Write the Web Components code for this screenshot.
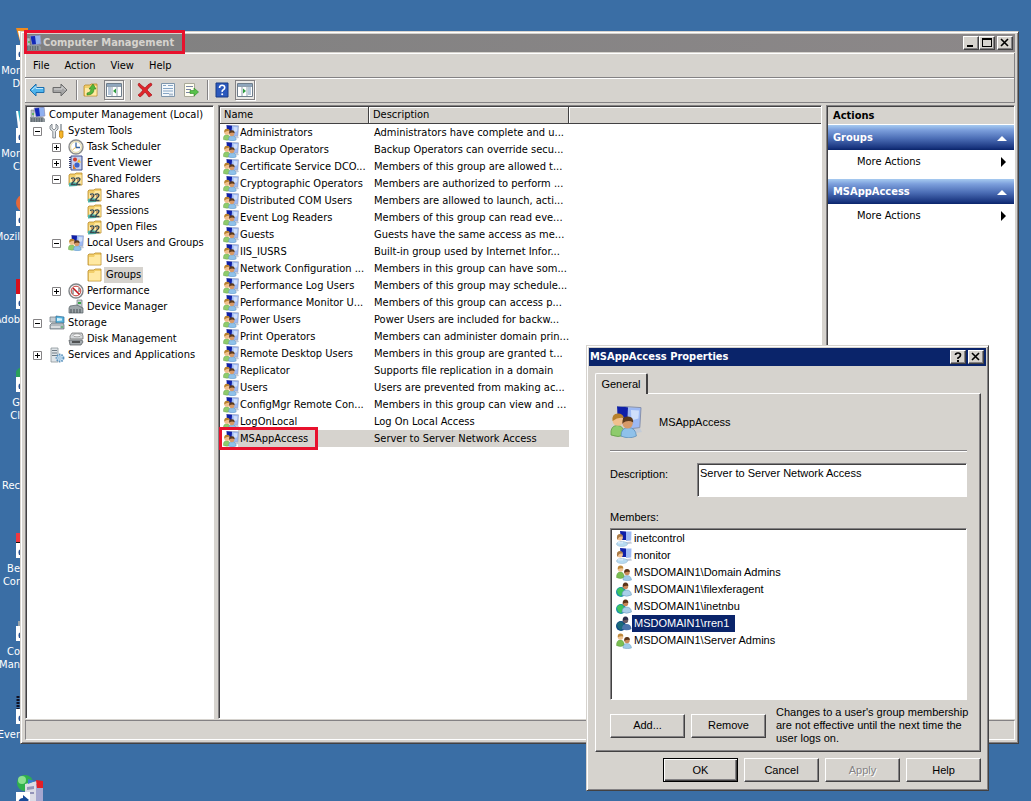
<!DOCTYPE html>
<html lang="en">
<head>
<meta charset="utf-8">
<title>Computer Management</title>
<style>
    :root {
        --face: #d6d3ce;
        --light: #ffffff;
        --shadow: #848284;
        --dark: #424142;
        --navy: #0a246a;
        --mark: #e8112d;
        --ui-font: Tahoma, "DejaVu Sans Condensed", "DejaVu Sans", sans-serif;
        --dialog-font: "MS Sans Serif", "Liberation Sans", Arial, sans-serif;
    }
    html, body {
        margin: 0;
        height: 100%;
    }
    body {
        font: 11px/16px var(--ui-font);
        color: #000;
        background: #3a6ea5;
    }
</style>
</head>
<body>
<desk-top>
    <desktop-icon kind="orange" lines="Mor|D"></desktop-icon>
    <desktop-icon kind="cyan" lines="Mor|C"></desktop-icon>
    <desktop-icon kind="fox" lines="Mozil"></desktop-icon>
    <desktop-icon kind="red" lines="Adob"></desktop-icon>
    <desktop-icon kind="green" lines="G|Cl"></desktop-icon>
    <desktop-icon kind="none" lines="Rec"></desktop-icon>
    <desktop-icon kind="redblack" lines="Be|Cor"></desktop-icon>
    <desktop-icon kind="gray" lines="Co|Man"></desktop-icon>
    <desktop-icon kind="black" lines="Ever"></desktop-icon>
    <desktop-icon kind="server" lines=""></desktop-icon>

    <management-window slot="window" caption="Computer Management">
        <console-tree slot="tree"></console-tree>
        <group-list slot="list"></group-list>
        <actions-pane slot="actions">
            <action-section heading="Groups"></action-section>
            <action-section heading="MSAppAccess"></action-section>
        </actions-pane>
    </management-window>

    <properties-dialog slot="dialog" group="MSAppAccess"></properties-dialog>
</desk-top>

<script>
// 16x16 glyphs, keyed by name
const FOLDER = `
    <path d="M1 14V4l1-1h5l1-1h6v12z" fill="#f2cf6b" stroke="#b98a2c" stroke-width=".8"/>
    <path d="M2 13.5V6h5l1-2h5.500v9.500z" fill="#ffe9a3"/>`;

const GLYPHS = {
    computer: `
        <path d="M4 1l10-1 1 9-9 1z" fill="#1228b8"/><path d="M9 1l5-.7 1 8.400-5 .6z" fill="#8fb0f0"/>
        <path d="M4 1l10-1 1 9-9 1z" fill="none" stroke="#aab" stroke-width=".7"/>
        <path d="M1 3h3v8H1z" fill="#b9c0c8" stroke="#777" stroke-width=".5"/>
        <path d="M0 10h13l2 2v3H0z" fill="#8f979c"/><path d="M1 12h12M1 14h12" stroke="#3d4850" stroke-dasharray="1.500 1"/>
        <circle cx="3" cy="7" r="1" fill="#49b64b"/>`,
    tools: `
        <path d="M3 1v4l2 2 2-2V1l2 2v3L6.500 8.500V15H3.800V8.500L1 6V3z" fill="#dfe3e6" stroke="#6d757b" stroke-width=".8"/>
        <path d="M12 1v7" stroke="#8b959b" stroke-width="1.500"/>
        <path d="M10.500 8h3.500v6l-1.700 1.500L10.500 14z" fill="#f5b52b" stroke="#b47505" stroke-width=".7"/>`,
    clock: `
        <circle cx="8" cy="8" r="7" fill="#f7f4e4" stroke="#8b8c8d" stroke-width="1.400"/>
        <circle cx="8" cy="8" r="5.400" fill="#fff" stroke="#e2d7a4"/>
        <path d="M8 3.500V8.500H12" fill="none" stroke="#3465a4" stroke-width="1.300"/>
        <path d="M8 8L4.500 11" stroke="#e9b74b"/>`,
    events: `
        <path d="M3 1h11v14H3z" fill="#c6d0ee" stroke="#3b4a8c"/>
        <path d="M2 2v12" stroke="#39406e" stroke-width="2" stroke-dasharray="1 1"/>
        <circle cx="7" cy="4.500" r="2" fill="#d23b2e"/><path d="M11 4l2 3.500H9z" fill="#f2bf2b"/>
        <circle cx="9" cy="10" r="2.600" fill="#3c62c9"/><path d="M5 9v5h3z" fill="#e07d2c"/>`,
    folder: FOLDER,
    shared: FOLDER + `
        <path d="M1 12l4-1 5 1-1 3-8 .5z" fill="#4eb7ad"/>
        <path d="M3 7.500q3-1.500 4 .5q0 1.500-2.500 3.500l-1 2h4M8 7.500q3-1.500 4 .5q0 1.500-2.500 3.500l-1 2h4" fill="none" stroke="#3b4a50" stroke-width="1.400"/>
        <circle cx="5" cy="9" r="1" fill="#b9824c"/><circle cx="10" cy="9" r="1" fill="#b9824c"/>`,
    group: `
        <path d="M9 12l6-1 1 2-6 1z" fill="#c3cbd8"/>
        <path d="M3.500 0L9 .6l-.3 8.400L4 9z" fill="#0f1fa8"/>
        <path d="M9 .6l6.500.2-.6 10-6 .6z" fill="#9db9f4"/>
        <path d="M10.500 2l4 .2-.3 4-3.500 1z" fill="#cfdffb"/>
        <path d="M3.500 0l12 .8-.6 10-5 .6" fill="none" stroke="#8791ad" stroke-width=".5"/>
        <path d="M.5 14.500q-.5-4.500 3-4.800q3.500 0 4 4.800q-3.500 1.500-7 0z" fill="#8ecb6c" stroke="#5f9a45" stroke-width=".4"/>
        <circle cx="4" cy="7.200" r="2.700" fill="#f0c08d"/>
        <path d="M1.300 7.500q-.6-3.800 2.700-3.800q2.600 0 2.900 2.300q-3-.6-5.600 1.500z" fill="#b8812c"/>
        <path d="M5.500 15q0-4.200 3.700-4.200q3.600 0 4 4.200q-3.700 1.800-7.700 0z" fill="#8fc1ea" stroke="#5a8fbd" stroke-width=".4"/>
        <circle cx="8.800" cy="8.600" r="2.600" fill="#d79a68"/>
        <path d="M6.200 8.600q-.3-3.600 2.800-3.400q2.800.1 2.600 3q-2.600-1.600-5.400.4z" fill="#5b3a1c"/>`,
    performance: `
        <circle cx="8" cy="8" r="7" fill="#f3f3f3" stroke="#808488" stroke-width="1.400"/>
        <circle cx="8" cy="8" r="4.800" fill="#fff" stroke="#c4453e"/>
        <path d="M5 5l6.500 6.500" stroke="#c3161c" stroke-width="1.600"/><path d="M5 11V6.500M11 5v4" stroke="#555"/>`,
    device: `
        <path d="M9 1h5v8H9z" fill="#c6ccd0" stroke="#737c83" stroke-width=".7"/><path d="M10 3h3v2h-3z" fill="#3ba54a"/>
        <path d="M2 7l7-1 6 3v5H1V9z" fill="#9ea6aa" stroke="#555e64" stroke-width=".7"/>
        <path d="M2 11h12M2 13h12" stroke="#465057" stroke-dasharray="2 1"/>`,
    storage: `
        <path d="M1 2h8l1 2v3H1z" fill="#c5ccd2" stroke="#6b7680" stroke-width=".7"/>
        <path d="M7 1l8 1v6l-8 1z" fill="#57b2dc" stroke="#2f6f99" stroke-width=".7"/><path d="M8 3l5 .500v2L8 6z" fill="#d8f2fb"/>
        <path d="M1 10l2-2h11l1 2v4H1z" fill="#b3bac0" stroke="#5f6a72" stroke-width=".7"/>
        <path d="M2 12h9" stroke="#fff"/><path d="M12 12h2" stroke="#31b44a"/>`,
    disk: `
        <path d="M2 5l2-3h10l1 3v3H2z" fill="#d3d6d8" stroke="#666" stroke-width=".7"/>
        <ellipse cx="9" cy="4.300" rx="4" ry="1.500" fill="#f7f7f7" stroke="#777" stroke-width=".6"/>
        <path d="M1 9h13l1 2-2 3H2z" fill="#a5abaf" stroke="#50565a" stroke-width=".7"/>
        <path d="M4 11h8" stroke="#333" stroke-width="1.500"/>`,
    services: `
        <path d="M2 1h7v14H2z" fill="#dfe4e8" stroke="#8a949b" stroke-width=".8"/>
        <path d="M3 3.500h5M3 6h5M3 8.500h5" stroke="#707c85"/>
        <circle cx="11" cy="11" r="3.500" fill="#c7dff2" stroke="#5c93bd" stroke-width="1.800" stroke-dasharray="1.500 1"/>
        <circle cx="11" cy="11" r="1.200" fill="#fff" stroke="#5c93bd" stroke-width=".6"/>`,
    user: `
        <path d="M4 0l6 .6V9L5 9z" fill="#0f1fa8"/><path d="M10 .6l5.500-.1-.3 9L10 10z" fill="#9db9f4"/>
        <path d="M7 11.500l8-1 1 2-8 1z" fill="#c3cbd8"/>
        <ellipse cx="6" cy="13" rx="5.500" ry="2.600" fill="#b6daf0" stroke="#7fa9c8" stroke-width=".4"/>
        <circle cx="4" cy="6.500" r="2.900" fill="#efc195"/>
        <path d="M1.200 9q-1.200-6 2.600-6q3 .2 3 2.500q-3-.5-4 1z" fill="#a97a45"/>
        <path d="M2 10q2.500 2 5 .5v2H2z" fill="#d6eafa"/>`,
    people: `
        <path d="M.5 12.500q0-5.500 3.800-5.500t4 5.500q-4 2-7.800 0z" fill="#7bbf52" stroke="#4d8c32" stroke-width=".4"/>
        <circle cx="4.500" cy="4" r="2.700" fill="#f0c695"/>
        <path d="M1.800 4.500q-.6-4 2.800-4q2.800 0 2.700 3q-2.800-1-5.500 1z" fill="#c08a3c"/>
        <path d="M7 15q0-4.500 4-4.500t4.500 4.500q-4 1.500-8.500 0z" fill="#9fcbe9" stroke="#5c8fb5" stroke-width=".4"/>
        <circle cx="11" cy="7.500" r="2.700" fill="#c98858"/>
        <path d="M8.300 8q-.6-4 2.800-4q2.800 0 2.700 3q-2.800-1-5.500 1z" fill="#5b3418"/>`,
    domain: `
        <circle cx="5" cy="10" r="5" fill="#1a93a8"/><path d="M1 8q3-4 6-1t-2 7q-4-1-4-6z" fill="#3fc55f"/>
        <path d="M6 13q0-5 4.500-5t5 5q-5 2.500-9.500 0z" fill="#a9cfe9" stroke="#5c8fb5" stroke-width=".5"/>
        <circle cx="9.500" cy="4.500" r="2.700" fill="#c98858"/>
        <path d="M6.800 5q-.6-4.500 2.800-4.500q2.800 0 2.700 3.500q-2.800-1-5.500 1z" fill="#5b3418"/>`,
    'domain-selected': `
        <circle cx="5" cy="10" r="5" fill="#0d4a86"/><path d="M1 8q3-4 6-1t-2 7q-4-1-4-6z" fill="#1c6a7a"/>
        <path d="M6 13q0-5 4.500-5t5 5q-5 2.500-9.500 0z" fill="#4c74ac"/>
        <circle cx="9.500" cy="4.500" r="2.700" fill="#6c5a63"/>
        <path d="M6.800 5q-.6-4.500 2.800-4.500q2.800 0 2.700 3.500q-2.800-1-5.500 1z" fill="#2b2d48"/>`,
    back: `<path d="M1 8l6-6v3.500h8v5H7V14z" fill="#4fb4ec" stroke="#1c6fae"/><path d="M3 8l4-3.500v2h7" fill="none" stroke="#bfe8fd"/>`,
    forward: `<path d="M15 8L9 2v3.500H1v5h8V14z" fill="#a5a5a5" stroke="#6b6b6b"/><path d="M2 7h8V4.500L13.500 8" fill="none" stroke="#d5d5d5"/>`,
    up: FOLDER + `<path d="M4 11q4 0 4-4H6l4-5 3 5h-2q0 6-7 6z" fill="#52b83b" stroke="#2d7d1c" stroke-width=".6"/>`,
    pane: `
        <path d="M.5 1.500h15v13H.5z" fill="#fff" stroke="#6f7d8b"/><path d="M1 2h14v2H1z" fill="#8fa6bd"/>
        <path d="M2 6h3M2 8h3M2 10h3M2 12h3" stroke="#6f91b5"/><path d="M6 5v9M11 5v9M1 4.500h14" stroke="#92a1b0"/><path d="M10 6.500v5L7 9z" fill="#2f9d3f"/>`,
    'action-pane': `
        <path d="M.5 1.500h15v13H.5z" fill="#fff" stroke="#6f7d8b"/><path d="M1 2h14v2H1z" fill="#8fa6bd"/>
        <path d="M11 6h3M11 8h3M11 10h3M11 12h3" stroke="#6f91b5"/><path d="M5 5v9M10 5v9M1 4.500h14" stroke="#92a1b0"/><path d="M6 6.500v5L9 9z" fill="#2f9d3f"/>`,
    remove: `<path d="M2 1q3 3 6 5q3-4 6-5l1 2q-3 2-5 5q3 3 5 5l-3 2q-2-3-4-5q-2 3-5 5l-2-2q3-2 5-5Q3 6 1 3z" fill="#e0252b" stroke="#a5141a" stroke-width=".7"/>`,
    properties: `
        <path d="M1.500 1.500h13v13h-13z" fill="#f4f8fb" stroke="#7e95ab"/>
        <path d="M3 3.500h3M8 3.500h5M3 6.500h10M3 9h10M3 11.500h6" stroke="#86a5c5"/><path d="M9 11.500h4v2H9z" fill="#aebfd0"/>`,
    export: `
        <path d="M1.500 1.500h10v13h-10z" fill="#fffef0" stroke="#a9a998"/><path d="M3 4.500h7M3 7.500h5M3 10.500h5" stroke="#7b86a6"/>
        <path d="M7 8.500h4V6l4.500 4-4.500 4v-2.500H7z" fill="#58c14b" stroke="#2d8a24" stroke-width=".6"/>`,
    help: `
        <path d="M2 1h12v14H2z" fill="#2b58bd" stroke="#193a85"/>
        <path d="M5.500 6q0-2.700 2.600-2.700T10.700 5.700Q10.700 7 9.300 7.700T8.200 10" fill="none" stroke="#fff" stroke-width="1.600"/><circle cx="8.200" cy="12.300" r="1" fill="#fff"/>`,
};

function icon(name, size = 16) {
    return `<svg class="icon" width="${size}" height="${size}" viewBox="0 0 16 16" aria-hidden="true">${GLYPHS[name]}</svg>`;
}

class ShadowElement extends HTMLElement {
    constructor() {
        super();
        this.attachShadow({ mode: 'open' });
    }

    connectedCallback() {
        this.shadowRoot.innerHTML = `<style>${this.styles()}</style>${this.markup()}`;
    }

    styles() { return ''; }
    markup() { return ''; }
}

class DeskTop extends ShadowElement {
    styles() {
        return `
            :host {
                display: block;
                position: relative;
                min-height: 100%;
                overflow: hidden;
            }
            .icons {
                position: absolute;
                top: 28px;
                left: 0;
            }
            /* windows float freely over the desktop */
            ::slotted([slot="window"]) {
                position: absolute;
                top: 31px;
                right: 12px;
                bottom: 57px;
                left: 20px;
            }
            ::slotted([slot="dialog"]) {
                position: absolute;
                top: 345px;
                right: 42px;
            }
        `;
    }

    markup() {
        return `
            <div class="icons"><slot></slot></div>
            <slot name="window"></slot>
            <slot name="dialog"></slot>
        `;
    }
}

class DesktopIcon extends ShadowElement {
    styles() {
        return `
            :host {
                display: block;
                height: 83px;
                color: #fff;
                line-height: 13px;
            }
            svg { display: block; margin-left: 16px; }
            .label {
                display: flex;
                flex-direction: column;
                align-items: flex-end;
                width: 20px;
                padding-top: 4px;
            }
        `;
    }

    markup() {
        const art = {
            orange: '<path d="M0 0h12v3H5v14z" fill="#f08b1d"/><path d="M2 3h10v14H5z" fill="#fff"/>',
            cyan: '<path d="M0 0h12v17H3z" fill="#29a9bf"/><path d="M0 0h2l3 17H2z" fill="#fff"/>',
            fox: '<circle cx="9" cy="9" r="9" fill="#e2683b"/>',
            red: '<path d="M0 2h12v16H0z" fill="#d80f1b"/>',
            green: '<circle cx="9" cy="16" r="10" fill="#29a05a"/>',
            redblack: '<path d="M0 7h12v9H0z" fill="#ee3940"/><path d="M0 16h12v3H0z" fill="#111"/>',
            gray: '<path d="M2 12h10v6H2z" fill="#9aa3a8"/>',
            black: '<path d="M2 4v14" stroke="#112" stroke-width="3" stroke-dasharray="2 1"/>',
        }[this.getAttribute('kind')];
        const server = `
            <circle cx="9" cy="8" r="8" fill="#2fb14c"/><circle cx="6" cy="5" r="4" fill="#8be08f"/>
            <path d="M9 9l12-3 6 3v23H9z" fill="#dcdce6"/><path d="M20 9h7v23h-7z" fill="#a5a7cf"/>
            <path d="M11 12l7-1v3l-7 1zM11 17h7v2h-7z" fill="#9293b8"/>
            <path d="M20 5l7 1v7h-6z" fill="#e21f26"/><path d="M12 4l7 2-7 3z" fill="#3b7bd2"/>
            <path d="M0 17h14v15H0z" fill="#fff"/><path d="M2 30q0-7 5-7v-3l6 5-6 5v-3q-3 0-5 3z" fill="#174a98"/>`;
        let shape = '';
        if (this.getAttribute('kind') === 'server') {
            shape = server;
        } else if (art) {
            shape = art + '<path d="M0 17h12v15H0z" fill="#fff"/><path d="M3 29q-2-6 3-6v6z" fill="#28508f"/>';
        }
        const lines = this.getAttribute('lines').split('|');
        return `
            <svg width="32" height="32" viewBox="0 0 32 32">${shape}</svg>
            <div class="label">${lines.map(line => `<span>${line}</span>`).join('')}</div>
        `;
    }
}

// Small square button in a window caption: min, max, help or close
class CaptionButton extends ShadowElement {
    styles() {
        return `
            :host { display: block; }
            button {
                display: block;
                width: 16px;
                height: 14px;
                padding: 0;
                border: 1px solid;
                border-color: var(--light) var(--dark) var(--dark) var(--light);
                box-shadow: inset -1px -1px var(--shadow);
                background: var(--face);
            }
            svg { display: block; }
        `;
    }

    markup() {
        const kind = this.getAttribute('kind');
        const shape = {
            minimize: '<path d="M3 8h6v2H3z"/>',
            maximize: '<path d="M2 1h10v9H2zM3 3v6h8V3z" fill-rule="evenodd"/>',
            close: '<path d="M3 2l7 7M10 2l-7 7" stroke="#000" stroke-width="1.600"/>',
            help: '<path d="M4.500 4q0-2 2.500-2t2.500 2-2.500 3v1" fill="none" stroke="#000" stroke-width="1.700"/><path d="M6 9h2v2H6z"/>',
        }[kind];
        return `<button type="button" aria-label="${kind}"><svg width="14" height="12" viewBox="0 0 14 12">${shape}</svg></button>`;
    }
}

class ManagementWindow extends ShadowElement {
    styles() {
        return `
            :host {
                display: flex;
                flex-direction: column;
                box-sizing: border-box;
                padding: 2px 3px 3px 4px;
                background: var(--face);
                border: 1px solid;
                border-color: var(--face) var(--dark) var(--dark) var(--face);
                box-shadow: inset 1px 1px var(--light), inset -1px -1px var(--shadow);
            }
            .icon { display: block; flex: none; }
            header {
                position: relative;
                display: flex;
                align-items: center;
                height: 18px;
                padding: 0 2px 0 1px;
                color: var(--face);
                font-weight: bold;
                background: linear-gradient(90deg, #808080, #8c8889);
            }
            header h1 {
                flex: 1;
                margin: 0 0 0 1px;
                font: inherit;
            }
            .pair { margin-right: 2px; }
            /* highlight drawn round the caption */
            .mark {
                position: absolute;
                inset: -4px auto -2px -1px;
                width: 155px;
                border: 3px solid var(--mark);
            }
            nav, .toolbar {
                display: flex;
                align-items: center;
                border-right: 1px solid var(--shadow);
                border-bottom: 1px solid var(--shadow);
                box-shadow: inset 1px 1px var(--light);
            }
            nav {
                height: 22px;
                margin-top: 1px;
                padding: 2px 0 0 8px;
                gap: 15px;
            }
            nav button {
                padding: 0;
                border: 0;
                font: inherit;
                line-height: 16px;
                background: none;
            }
            .toolbar {
                height: 24px;
                padding-left: 2px;
                gap: 3px;
            }
            .toolbar button {
                padding: 2px;
                border: 0;
                background: none;
            }
            .toolbar .pressed {
                outline: 1px solid var(--shadow);
                outline-offset: -1px;
                background: #ebe9e6;
                box-shadow: 1px 1px var(--light);
            }
            .toolbar i {
                width: 1px;
                height: 20px;
                margin: 0 1px 0 3px;
                background: var(--shadow);
                box-shadow: 1px 0 var(--light);
            }
            main {
                flex: 1;
                display: grid;
                grid-template-columns: 189px minmax(0, 1fr) 189px;
                gap: 4px;
                min-height: 0;
                margin-top: 2px;
            }
            ::slotted(*) {
                overflow: hidden;
                border: 1px solid;
                border-color: var(--shadow) var(--light) var(--light) var(--shadow);
                box-shadow: inset 1px 1px var(--dark);
                padding: 1px 0 0 1px;
            }
            footer {
                height: 18px;
                margin-top: 1px;
                border: 1px solid;
                border-color: var(--shadow) var(--light) var(--light) var(--shadow);
            }
        `;
    }

    markup() {
        const tool = (name, pressed = '') =>
            `<button type="button" class="${pressed}" aria-label="${name}">${icon(name)}</button>`;
        return `
            <header>
                ${icon('computer')}
                <h1>${this.getAttribute('caption')}</h1>
                <caption-button kind="minimize"></caption-button>
                <caption-button class="pair" kind="maximize"></caption-button>
                <caption-button kind="close"></caption-button>
                <div class="mark"></div>
            </header>
            <nav>
                ${['File', 'Action', 'View', 'Help'].map(name => `<button type="button">${name}</button>`).join('')}
            </nav>
            <div class="toolbar">
                ${tool('back')}${tool('forward')}<i></i>
                ${tool('up')}${tool('pane', 'pressed')}<i></i>
                ${tool('remove')}${tool('properties')}${tool('export')}<i></i>
                ${tool('help')}${tool('action-pane', 'pressed')}
            </div>
            <main>
                <slot name="tree"></slot>
                <slot name="list"></slot>
                <slot name="actions"></slot>
            </main>
            <footer></footer>
        `;
    }
}

// level, icon, label, expander state
const TREE = [
    [0, 'computer', 'Computer Management (Local)', ''],
    [1, 'tools', 'System Tools', '-'],
    [2, 'clock', 'Task Scheduler', '+'],
    [2, 'events', 'Event Viewer', '+'],
    [2, 'shared', 'Shared Folders', '-'],
    [3, 'shared', 'Shares', ''],
    [3, 'shared', 'Sessions', ''],
    [3, 'shared', 'Open Files', ''],
    [2, 'group', 'Local Users and Groups', '-'],
    [3, 'folder', 'Users', ''],
    [3, 'folder', 'Groups', ''],
    [2, 'performance', 'Performance', '+'],
    [2, 'device', 'Device Manager', ''],
    [1, 'storage', 'Storage', '-'],
    [2, 'disk', 'Disk Management', ''],
    [1, 'services', 'Services and Applications', '+'],
];

class ConsoleTree extends ShadowElement {
    styles() {
        return `
            :host { display: block; background: #fff; }
            ul { margin: 0; padding: 0; list-style: none; white-space: nowrap; }
            li {
                display: flex;
                align-items: center;
                height: 16px;
                padding-left: calc(var(--level) * 19px - 13px);
            }
            li.root { padding-left: 3px; }
            .box { width: 9px; height: 9px; margin-right: 7px; flex: none; }
            .root .box { display: none; }
            .icon { flex: none; margin-right: 1px; }
            .label { padding: 0 2px; }
            .selected .label { background: var(--face); }
        `;
    }

    markup() {
        const box = state => `
            <svg class="box" viewBox="0 0 9 9">${state ? `
                <path d="M.5 .5h8v8h-8z" fill="#fff" stroke="#848284"/>
                <path d="M2 4.500h5${state === '+' ? 'M4.500 2v5' : ''}" stroke="#000"/>` : ''}
            </svg>`;
        return `
            <ul role="tree">
                ${TREE.map(([level, glyph, label, state]) => `
                    <li role="treeitem" style="--level: ${level}"
                        class="${level === 0 ? 'root' : ''} ${label === 'Groups' ? 'selected' : ''}">
                        ${box(state)}${icon(glyph)}<span class="label">${label}</span>
                    </li>`).join('')}
            </ul>
        `;
    }
}

const GROUPS = [
    ['Administrators', 'Administrators have complete and u...'],
    ['Backup Operators', 'Backup Operators can override secu...'],
    ['Certificate Service DCO...', 'Members of this group are allowed t...'],
    ['Cryptographic Operators', 'Members are authorized to perform ...'],
    ['Distributed COM Users', 'Members are allowed to launch, acti...'],
    ['Event Log Readers', 'Members of this group can read eve...'],
    ['Guests', 'Guests have the same access as me...'],
    ['IIS_IUSRS', 'Built-in group used by Internet Infor...'],
    ['Network Configuration ...', 'Members in this group can have som...'],
    ['Performance Log Users', 'Members of this group may schedule...'],
    ['Performance Monitor U...', 'Members of this group can access p...'],
    ['Power Users', 'Power Users are included for backw...'],
    ['Print Operators', 'Members can administer domain prin...'],
    ['Remote Desktop Users', 'Members in this group are granted t...'],
    ['Replicator', 'Supports file replication in a domain'],
    ['Users', 'Users are prevented from making ac...'],
    ['ConfigMgr Remote Con...', 'Members in this group can view and ...'],
    ['LogOnLocal', 'Log On Local Access'],
    ['MSAppAccess', 'Server to Server Network Access'],
];

class GroupList extends ShadowElement {
    styles() {
        return `
            :host { display: block; background: #fff; }
            table {
                width: 100%;
                border-collapse: separate;
                border-spacing: 0;
                table-layout: fixed;
            }
            .name { width: 149px; }
            .description { width: 200px; }
            th {
                box-sizing: border-box;
                height: 17px;
                padding: 0 4px;
                border-right: 1px solid var(--dark);
                border-bottom: 1px solid var(--dark);
                box-shadow: inset 1px 1px var(--light);
                background: var(--face);
                font-weight: normal;
                line-height: 16px;
                text-align: left;
            }
            th:last-child { border-right: 0; }
            td {
                height: 17px;
                padding: 0 0 0 5px;
                line-height: 17px;
                white-space: nowrap;
            }
            td:first-child { padding-left: 3px; }
            .entry {
                position: relative;
                display: flex;
                align-items: center;
                gap: 1px;
            }
            .icon { flex: none; }
            .selected td:not(:last-child) { background: var(--face); }
            .selected td:first-child {
                background: linear-gradient(90deg, #fff 18px, var(--face) 18px);
            }
            /* highlight drawn round the selected group */
            .mark {
                position: absolute;
                inset: -3px auto -3px -4px;
                width: 93px;
                border: 3px solid var(--mark);
            }
        `;
    }

    markup() {
        const selected = 'MSAppAccess';
        return `
            <table>
                <thead>
                    <tr><th class="name">Name</th><th class="description">Description</th><th></th></tr>
                </thead>
                <tbody>
                    ${GROUPS.map(([name, description]) => `
                        <tr class="${name === selected ? 'selected' : ''}">
                            <td><div class="entry">${icon('group')}<span>${name}</span>${name === selected ? '<div class="mark"></div>' : ''}</div></td>
                            <td>${description}</td>
                            <td></td>
                        </tr>`).join('')}
                </tbody>
            </table>
        `;
    }
}

class ActionsPane extends ShadowElement {
    styles() {
        return `
            :host { display: block; background: #fff; }
            h2 {
                margin: 0 0 1px;
                height: 17px;
                padding-left: 5px;
                font: bold 11px/17px var(--ui-font);
                background: var(--face);
            }
        `;
    }

    markup() {
        return '<h2>Actions</h2><slot></slot>';
    }
}

class ActionSection extends ShadowElement {
    styles() {
        return `
            :host { display: block; margin-bottom: 5px; }
            .bar, .more {
                display: flex;
                align-items: center;
                justify-content: space-between;
                box-sizing: border-box;
                width: 100%;
                border: 0;
                font: inherit;
            }
            .bar {
                height: 25px;
                padding: 0 7px 0 5px;
                color: #fff;
                font-weight: bold;
                background: linear-gradient(#a6caf0, #7c9fdc 20%, #4a6cb4 55%, #1a3680 90%, #0a246a);
            }
            .more {
                height: 24px;
                padding: 0 7px 0 29px;
                background: #fff;
            }
        `;
    }

    markup() {
        return `
            <button type="button" class="bar">
                ${this.getAttribute('heading')}
                <svg width="10" height="6"><path d="M0 6l5-5 5 5z" fill="#fff"/></svg>
            </button>
            <button type="button" class="more">
                More Actions
                <svg width="7" height="10"><path d="M1 0v10l5-5z"/></svg>
            </button>
        `;
    }
}

class DialogButton extends ShadowElement {
    styles() {
        return `
            :host { display: block; }
            button {
                display: block;
                width: 75px;
                height: 24px;
                padding: 0;
                border: 1px solid;
                border-color: var(--light) var(--dark) var(--dark) var(--light);
                box-shadow: inset -1px -1px var(--shadow);
                background: var(--face);
                font: inherit;
            }
            :host([default]) button {
                border-color: #000;
                box-shadow: inset 1px 1px var(--light), inset -1px -1px var(--dark), inset -2px -2px var(--shadow);
            }
            button:disabled { color: var(--shadow); text-shadow: 1px 1px var(--light); }
        `;
    }

    markup() {
        return `<button type="button" ${this.hasAttribute('disabled') ? 'disabled' : ''}><slot></slot></button>`;
    }
}

const MEMBERS = [
    ['user', 'inetcontrol'],
    ['user', 'monitor'],
    ['people', 'MSDOMAIN1\\Domain Admins'],
    ['domain', 'MSDOMAIN1\\filexferagent'],
    ['domain', 'MSDOMAIN1\\inetnbu'],
    ['domain-selected', 'MSDOMAIN1\\rren1'],
    ['people', 'MSDOMAIN1\\Server Admins'],
];

class PropertiesDialog extends ShadowElement {
    styles() {
        return `
            :host {
                display: block;
                box-sizing: border-box;
                width: 403px;
                padding: 2px;
                background: var(--face);
                border: 1px solid;
                border-color: var(--face) var(--dark) var(--dark) var(--face);
                box-shadow: inset 1px 1px var(--light), inset -1px -1px var(--shadow);
                font-family: var(--dialog-font);
                line-height: 13px;
            }
            header {
                display: flex;
                align-items: center;
                gap: 2px;
                height: 18px;
                padding: 0 2px 0 1px;
                color: #fff;
                font: bold 11px/18px var(--ui-font);
                background: var(--navy);
            }
            h2 { flex: 1; margin: 0; font: inherit; }
            .body { padding: 7px 5px 6px 6px; }
            .tab {
                display: block;
                position: relative;
                width: 53px;
                height: 21px;
                margin-bottom: -1px;
                padding: 0;
                border: 1px solid var(--light);
                border-right: 2px solid var(--dark);
                border-bottom: 0;
                border-radius: 2px 2px 0 0;
                background: var(--face);
                font: inherit;
            }
            .panel {
                padding: 12px 13px 6px 14px;
                border: 1px solid;
                border-color: var(--light) var(--dark) var(--dark) var(--light);
                box-shadow: inset -1px -1px var(--shadow);
            }
            .icon { display: block; flex: none; }
            .identity {
                display: flex;
                align-items: center;
                gap: 17px;
            }
            hr {
                margin: 12px 0 11px;
                border: 0;
                border-top: 1px solid var(--shadow);
                border-bottom: 1px solid var(--light);
            }
            .field {
                display: grid;
                grid-template-columns: 87px 1fr;
            }
            .field label { padding-top: 5px; }
            textarea, ul {
                box-sizing: border-box;
                margin: 0;
                border: 1px solid;
                border-color: var(--shadow) var(--light) var(--light) var(--shadow);
                box-shadow: inset 1px 1px var(--dark);
                background: #fff;
            }
            textarea {
                display: block;
                width: 100%;
                height: 34px;
                padding: 3px 2px;
                resize: none;
                overflow: hidden;
                font: inherit;
            }
            .members { margin: 14px 0 4px; }
            ul {
                height: 172px;
                padding: 1px 5px;
                list-style: none;
            }
            li { display: flex; align-items: center; height: 17px; }
            li span { padding: 2px; }
            .selected span {
                padding-right: 6px;
                color: #fff;
                background: var(--navy);
            }
            .edit {
                display: flex;
                align-items: center;
                gap: 6px;
                margin: 6px -8px 0 0;
            }
            .edit p { flex: 1; margin: 0 0 0 4px; }
            .actions {
                display: flex;
                justify-content: flex-end;
                gap: 6px;
                margin-top: 6px;
            }
        `;
    }

    markup() {
        const group = this.getAttribute('group');
        return `
            <header>
                <h2>${group} Properties</h2>
                <caption-button kind="help"></caption-button>
                <caption-button kind="close"></caption-button>
            </header>
            <div class="body">
                <button type="button" class="tab">General</button>
                <div class="panel">
                    <div class="identity">${icon('group', 32)}<span>${group}</span></div>
                    <hr>
                    <div class="field">
                        <label for="description">Description:</label>
                        <textarea id="description" spellcheck="false">Server to Server Network Access</textarea>
                    </div>
                    <div class="members" id="members">Members:</div>
                    <ul role="listbox" aria-labelledby="members">
                        ${MEMBERS.map(([glyph, name]) => `
                            <li role="option" class="${glyph === 'domain-selected' ? 'selected' : ''}">${icon(glyph)}<span>${name}</span></li>`).join('')}
                    </ul>
                    <div class="edit">
                        <dialog-button>Add...</dialog-button>
                        <dialog-button>Remove</dialog-button>
                        <p>Changes to a user's group membership are not effective until the next time the user logs on.</p>
                    </div>
                </div>
                <div class="actions">
                    <dialog-button default>OK</dialog-button>
                    <dialog-button>Cancel</dialog-button>
                    <dialog-button disabled>Apply</dialog-button>
                    <dialog-button>Help</dialog-button>
                </div>
            </div>
        `;
    }
}

customElements.define('caption-button', CaptionButton);
customElements.define('dialog-button', DialogButton);
customElements.define('desktop-icon', DesktopIcon);
customElements.define('console-tree', ConsoleTree);
customElements.define('group-list', GroupList);
customElements.define('action-section', ActionSection);
customElements.define('actions-pane', ActionsPane);
customElements.define('management-window', ManagementWindow);
customElements.define('properties-dialog', PropertiesDialog);
customElements.define('desk-top', DeskTop);
</script>
</body>
</html>
